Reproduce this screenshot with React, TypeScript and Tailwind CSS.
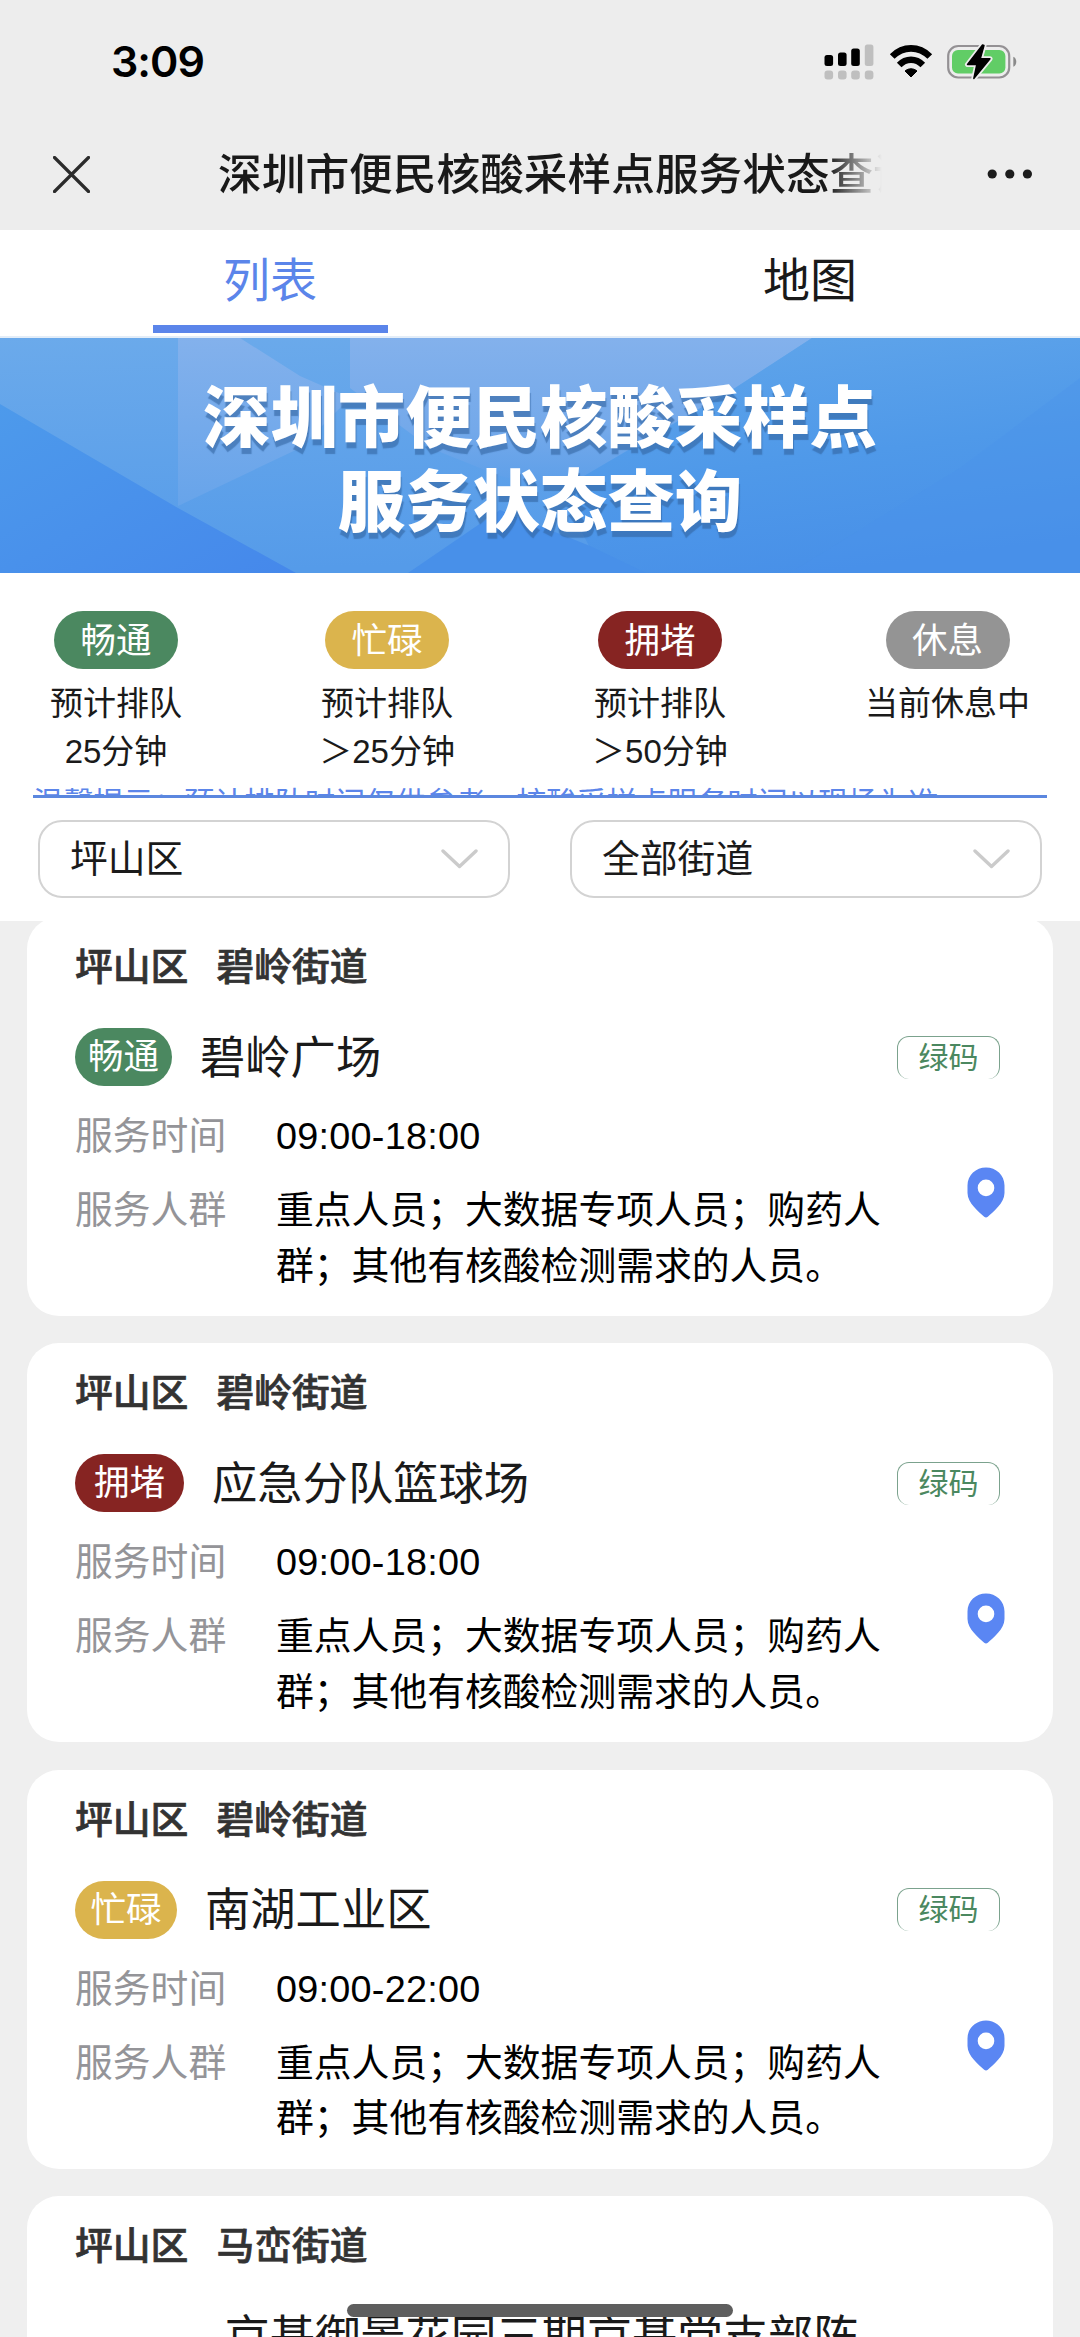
type Status = 'smooth' | 'busy' | 'crowded' | 'rest'

interface Site {
  id: number
  district: string
  street: string
  name: string
  status?: Status
  hours?: string
  people?: string
}

const STATUS: Record<Status, { label: string; color: string }> = {
  smooth: { label: '畅通', color: 'bg-[#4b8860]' },
  busy: { label: '忙碌', color: 'bg-[#dbb44d]' },
  crowded: { label: '拥堵', color: 'bg-[#862422]' },
  rest: { label: '休息', color: 'bg-[#949494]' },
}

const PILL_WIDTH: Record<Status, string> = {
  smooth: 'w-[97px]',
  busy: 'w-[102px]',
  crowded: 'w-[109px]',
  rest: 'w-[97px]',
}

const LEGEND: { status: Status; lines: string[] }[] = [
  { status: 'smooth', lines: ['预计排队', '25分钟'] },
  { status: 'busy', lines: ['预计排队', '＞25分钟'] },
  { status: 'crowded', lines: ['预计排队', '＞50分钟'] },
  { status: 'rest', lines: ['当前休息中'] },
]

const PEOPLE = '重点人员；大数据专项人员；购药人群；其他有核酸检测需求的人员。'

const SITES: Site[] = [
  { id: 1, district: '坪山区', street: '碧岭街道', name: '碧岭广场', status: 'smooth', hours: '09:00-18:00', people: PEOPLE },
  { id: 2, district: '坪山区', street: '碧岭街道', name: '应急分队篮球场', status: 'crowded', hours: '09:00-18:00', people: PEOPLE },
  { id: 3, district: '坪山区', street: '碧岭街道', name: '南湖工业区', status: 'busy', hours: '09:00-22:00', people: PEOPLE },
  { id: 4, district: '坪山区', street: '马峦街道', name: '京基御景花园三期京基党支部阵' },
]

/* =======================
   HEADER
======================= */

function StatusBar() {
  return (
    <div className="flex h-[120px] items-center justify-between pl-[111px] pr-[63px] pt-[3px]">
      <span className="font-['Inter'] text-[43px] font-semibold leading-none tracking-[-1px] text-black">
        3:09
      </span>
      <div className="flex items-center">
        <svg width="50" height="36" viewBox="0 0 50 36">
          <rect x="0.5" y="11" width="8.6" height="11" rx="2.5" fill="#000" />
          <rect x="14" y="8.5" width="8.6" height="13.5" rx="2.5" fill="#000" />
          <rect x="27.2" y="4.5" width="8.6" height="17.5" rx="2.5" fill="#000" />
          <rect x="40.8" y="0.5" width="8.6" height="21.5" rx="2.5" fill="#bfbfbf" />
          <rect x="0.5" y="26.5" width="8.6" height="9" rx="3" fill="#bfbfbf" />
          <rect x="14" y="26.5" width="8.6" height="9" rx="3" fill="#bfbfbf" />
          <rect x="27.2" y="26.5" width="8.6" height="9" rx="3" fill="#bfbfbf" />
          <rect x="40.8" y="26.5" width="8.6" height="9" rx="3" fill="#bfbfbf" />
        </svg>
        <svg className="ml-[15px]" width="44" height="34" viewBox="0 0 44 34">
          <path d="M3.2 11.5C14 0.6 30 0.6 40.8 11.5" fill="none" stroke="#000" strokeWidth="6.6" />
          <path d="M10.2 20C17 13 27 13 33.8 20" fill="none" stroke="#000" strokeWidth="6.4" />
          <path d="M16 26C19.6 23 24.4 23 28 26L22 32Z" fill="#000" stroke="#000" strokeWidth="1" strokeLinejoin="round" />
        </svg>
        <svg className="ml-[14px]" width="70" height="36" viewBox="0 0 70 36">
          <rect x="1.2" y="2" width="61" height="31.5" rx="10" fill="none" stroke="#949194" strokeWidth="2.2" />
          <path d="M66.3 12.8C70.3 14.5 70.3 21.2 66.3 22.8Z" fill="#8a8a8a" />
          <rect x="5" y="6" width="53.4" height="23.5" rx="6" fill="#61cd66" />
          <path
            d="M35.5 1L20.5 20.5H29.8L26.8 34.5L43 14.8H33.3L37 1.5Z"
            fill="#000"
            stroke="#ededed"
            strokeWidth="5"
            paintOrder="stroke"
            strokeLinejoin="round"
          />
          <path d="M35.5 1L20.5 20.5H29.8L26.8 34.5L43 14.8H33.3L37 1.5Z" fill="#000" stroke="#000" strokeWidth="1.4" strokeLinejoin="round" />
        </svg>
      </div>
    </div>
  )
}

function NavBar() {
  return (
    <div className="flex h-[110px] items-center pb-[2px] pl-[53px] pr-[47px]">
      <svg width="37" height="37" viewBox="0 0 37 37">
        <path d="M1.5 1.5L35.5 35.5M35.5 1.5L1.5 35.5" stroke="#2b2b2b" strokeWidth="3.2" strokeLinecap="round" />
      </svg>
      <div className="ml-[128px] w-[665px] overflow-hidden whitespace-nowrap pt-[2px] text-[43.7px] font-medium leading-[60px] text-[#191919] [mask-image:linear-gradient(to_right,#000_610px,transparent_664px)]">
        深圳市便民核酸采样点服务状态查询
      </div>
      <svg className="ml-auto" width="46" height="10" viewBox="0 0 46 10">
        <circle cx="5.2" cy="5" r="4.6" fill="#1c1c1c" />
        <circle cx="22.8" cy="5" r="4.6" fill="#1c1c1c" />
        <circle cx="40.4" cy="5" r="4.6" fill="#1c1c1c" />
      </svg>
    </div>
  )
}

function Tabs() {
  return (
    <div className="flex h-[108px] border-b-2 border-[#e3edf8] bg-white text-[47px] leading-[66px] text-[#191919]">
      <div className="flex w-1/2 flex-col items-center justify-between pb-[3px] pt-[18px] text-[#5b85ea]">
        列表
        <div className="h-2 w-[235px] bg-[#5b85ea]" />
      </div>
      <div className="w-1/2 pt-[18px] text-center">地图</div>
    </div>
  )
}

function Banner() {
  return (
    <div className="relative h-[235px] bg-[#559be9]">
      <svg className="absolute inset-0" width="1080" height="235" viewBox="0 0 1080 235">
        <defs>
          <linearGradient id="base" x1="0" y1="0" x2="0.15" y2="1">
            <stop offset="0" stopColor="#6baaeb" />
            <stop offset="1" stopColor="#559be9" />
          </linearGradient>
          <linearGradient id="corner" x1="0" y1="0" x2="1" y2="1">
            <stop offset="0" stopColor="#4d9aeb" />
            <stop offset="1" stopColor="#4588eb" />
          </linearGradient>
          <linearGradient id="light" x1="0" y1="0" x2="0" y2="1">
            <stop offset="0" stopColor="#83b1ec" />
            <stop offset="1" stopColor="#67a4ea" />
          </linearGradient>
          <linearGradient id="glow" x1="0" y1="0" x2="0" y2="1">
            <stop offset="0" stopColor="#83b1ec" />
            <stop offset="0.6" stopColor="#74a9ea" />
            <stop offset="1" stopColor="#5b9ee9" />
          </linearGradient>
          <linearGradient id="right" x1="0.2" y1="0" x2="0.5" y2="1">
            <stop offset="0" stopColor="#60a5ea" />
            <stop offset="0.55" stopColor="#4f99e9" />
            <stop offset="1" stopColor="#4890e8" />
          </linearGradient>
        </defs>
        <rect width="1080" height="235" fill="url(#base)" />
        <path d="M178 0H240L300 38L350 60L300 110L178 168Z" fill="url(#light)" />
        <path d="M350 0H812L735 50L640 105L560 152L500 138L430 110L350 50Z" fill="url(#glow)" />
        <path d="M812 0H1080V235H640L590 210L560 152L735 50Z" fill="url(#right)" />
        <path d="M0 66L178 170L296 235H0Z" fill="url(#corner)" />
        <path d="M408 235L500 172L590 208L646 235Z" fill="#4890e9" />
        <path d="M960 130L1080 40V235H790Z" fill="#4a91ea" opacity="0.35" />
      </svg>
      <h1 className="relative pt-[39px] text-center text-[67.4px] font-black leading-[84px] text-white [text-shadow:1px_6px_1px_rgba(50,100,160,0.6)]">
        深圳市便民核酸采样点
        <br />
        服务状态查询
      </h1>
    </div>
  )
}

/* =======================
   LEGEND + FILTERS
======================= */

function Legend() {
  return (
    <div className="flex h-[213px] items-start justify-between px-[50px] pt-[38px]">
      {LEGEND.map((item) => (
        <div key={item.status} className="flex flex-col items-center text-[33px] leading-[48px] text-[#1a1a1a]">
          <span
            className={`mb-[11px] flex h-[58px] w-[124px] items-center justify-center rounded-full pt-[2px] text-[35.5px] leading-[56px] text-white ${STATUS[item.status].color}`}
          >
            {STATUS[item.status].label}
          </span>
          {item.lines.map((line) => (
            <span key={line}>{line}</span>
          ))}
        </div>
      ))}
    </div>
  )
}

function Select({ value }: { value: string }) {
  return (
    <div className="flex h-[78px] w-[472px] items-center justify-between rounded-[24px] border-[2.5px] border-[#d3d3d3] bg-white pl-[30px] pr-[30px] text-[37.8px] leading-[56px] text-[#1a1a1a]">
      {value}
      <svg width="37" height="20" viewBox="0 0 37 20">
        <path d="M2 2L18.5 17.5L35 2" fill="none" stroke="#cbcbcb" strokeWidth="3.4" strokeLinecap="round" strokeLinejoin="round" />
      </svg>
    </div>
  )
}

/* =======================
   CARD
======================= */

function Pin() {
  return (
    <svg width="38" height="51" viewBox="0 0 38 51">
      <path
        fillRule="evenodd"
        d="M19 0.5C9 0.5 0.5 8 0.5 18.5V26C0.5 36 12 45 17.2 49.8Q19 51.3 20.8 49.8C26 45 37.5 36 37.5 26V18.5C37.5 8 29 0.5 19 0.5ZM19 12.6A8.3 8.3 0 1 1 19 29.2A8.3 8.3 0 1 1 19 12.6Z"
        fill="#5a86f3"
      />
    </svg>
  )
}

function SiteCard({ site }: { site: Site }) {
  return (
    <div className="relative h-[399px] shrink-0 rounded-[32px] bg-white px-[48px] pt-[22px]">
      <div className="flex gap-[28px] text-[37.8px] font-medium leading-[56px] text-[#333] [-webkit-text-stroke:0.7px_#333]">
        <span>{site.district}</span>
        <span>{site.street}</span>
      </div>

      {site.status ? (
        <div className="mt-[33px] flex h-[58px] items-center">
          <span
            className={`flex h-[58px] items-center justify-center rounded-full text-[35.5px] leading-[56px] text-white ${PILL_WIDTH[site.status]} ${STATUS[site.status].color}`}
          >
            {STATUS[site.status].label}
          </span>
          <span className="ml-[28px] pt-[3px] text-[45.3px] leading-[58px] text-[#1a1a1a]">{site.name}</span>
          <span className="ml-auto mr-[5px] h-[43px] w-[103px] rounded-[12px] border border-b-0 border-[#7ba28d] text-center text-[30px] leading-[41px] text-[#4b8860]">
            绿码
          </span>
        </div>
      ) : (
        <div className="mt-[35px] pl-[3px] text-center text-[45.3px] leading-[58px] text-[#1a1a1a]">{site.name}</div>
      )}

      {site.hours && (
        <div className="mt-[22px] flex text-[37.8px] leading-[56px]">
          <span className="w-[201px] text-[#949498]">服务时间</span>
          <span className="tracking-[0.25px] text-black">{site.hours}</span>
        </div>
      )}
      {site.people && (
        <div className="mt-[19px] flex text-[37.8px] leading-[55.5px]">
          <span className="w-[201px] shrink-0 text-[#949498]">服务人群</span>
          <span className="w-[610px] text-black">{site.people}</span>
        </div>
      )}

      {site.people && (
        <div className="absolute right-[48px] top-[250px]">
          <Pin />
        </div>
      )}
    </div>
  )
}

export default function App() {
  return (
    <div
      lang="zh-CN"
      className="relative flex h-[2337px] w-[1080px] flex-col overflow-hidden bg-[#efefef] font-['Liberation_Sans','Noto_Sans_CJK_SC',sans-serif]"
    >
      <header className="h-[230px] shrink-0 bg-[#ededed]">
        <StatusBar />
        <NavBar />
      </header>
      <Tabs />
      <Banner />

      <section className="h-[348px] shrink-0 bg-white">
        <Legend />
        <div className="mx-[33px] h-[12px] overflow-hidden whitespace-nowrap border-b-[3px] border-[#5b87df] text-[30.2px] leading-[36px] text-[#5b85ea]">
          温馨提示：预计排队时间仅供参考，核酸采样点服务时间以现场为准
        </div>
        <div className="mt-[22px] flex justify-between px-[38px]">
          <Select value="坪山区" />
          <Select value="全部街道" />
        </div>
      </section>

      <main className="flex min-h-0 flex-1 flex-col overflow-hidden px-[27px]">
        <div className="-mt-[4px] flex flex-col gap-[27.4px]">
          {SITES.map((site) => (
            <SiteCard key={site.id} site={site} />
          ))}
        </div>
      </main>

      {/* home indicator */}
      <div className="absolute left-[347px] top-[2304px] h-[13px] w-[386px] rounded-full bg-[#5e5e5e]" />
    </div>
  )
}
